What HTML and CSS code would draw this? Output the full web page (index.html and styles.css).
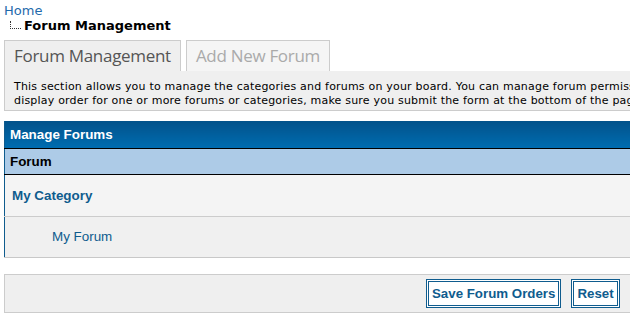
FILE: index.html
```html
<html>

<head>
    <title>Forum Management</title>
    <link rel="stylesheet" href="styles.css">
</head>

<body>

    <div class="page">
        <div class="breadcrumb">
            <a href="#">Home</a>
            <div class="current"><span class="branch"></span>Forum Management</div>
        </div>

        <ul class="tabs">
            <li class="active">Forum Management</li>
            <li>Add New Forum</li>
        </ul>
        <div class="tab-desc">
            This section allows you to manage the categories and forums on your board. You can manage forum permissions and forum moderators as well. If you change the<br>
            display order for one or more forums or categories, make sure you submit the form at the bottom of the page.
        </div>

        <table class="general">
            <tr>
                <th class="title">Manage Forums</th>
            </tr>
            <tr>
                <th class="cols">Forum</th>
            </tr>
            <tr class="row-cat">
                <td><a href="#">My Category</a></td>
            </tr>
            <tr class="row-forum">
                <td><a href="#">My Forum</a></td>
            </tr>
        </table>

        <div class="form-buttons">
            <button>Save Forum Orders</button>
            <button>Reset</button>
        </div>
    </div>

</body>

</html>
```
FILE: styles.css
```css
* {
    margin: 0;
    padding: 0;
    box-sizing: border-box;
}

html {
    overflow: hidden;
}

body {
    font: 13px Verdana, "DejaVu Sans", sans-serif;
    color: #000000;
    background: #ffffff;
}

a {
    color: #0f5c8e;
    text-decoration: none;
}

.page {
    width: 900px;
    padding: 4px 4px;
}

.breadcrumb a {
    color: #1f6aab;
    line-height: 14px;
}

.current {
    font-weight: bold;
    line-height: 16px;
    display: flex;
    align-items: flex-end;
}

.branch {
    width: 11px;
    height: 8px;
    margin: 0 3px 5px 6px;
    border-left: 1px dotted #333333;
    border-bottom: 1px dotted #333333;
}

.tabs {
    list-style: none;
    display: flex;
    align-items: flex-end;
    margin-top: 6px;
    height: 31px;
}

.tabs li {
    font: 17px "Open Sans", "Noto Sans", sans-serif;
    letter-spacing: -0.3px;
    color: #aaaaaa;
    background: #f5f5f5;
    border: 1px solid #cccccc;
    border-bottom: none;
    padding: 0 9px;
    height: 31px;
    line-height: 30px;
    margin-right: 5px;
}

.tabs li.active {
    color: #555555;
    background: #efefef;
}

.tab-desc {
    background: #efefef;
    border: 1px solid #cccccc;
    border-top: none;
    padding: 9px 9px 6px 9px;
    font-size: 11px;
    letter-spacing: 0.2px;
    line-height: 14px;
    white-space: nowrap;
    height: 40px;
    overflow: hidden;
}

table.general {
    width: 100%;
    margin-top: 10px;
    border-collapse: collapse;
    border-left: 1px solid #0f5c8e;
    border-bottom: 1px solid #c8c8c8;
    font: 13.4px "Liberation Sans", Arial, sans-serif;
}

table.general th {
    text-align: left;
    font-weight: bold;
    padding: 0 5px;
}

th.title {
    color: #ffffff;
    height: 27px;
    background: linear-gradient(#02528a, #006cb0);
    border-bottom: 1px solid #000000;
}

th.cols {
    height: 26px;
    background: #adcbe7;
    border-bottom: 1px solid #000000;
}

.row-cat td {
    height: 42px;
    background: #f4f4f4;
    border-bottom: 1px solid #cccccc;
    padding-left: 7px;
    font-weight: bold;
}

.row-forum td {
    height: 41px;
    background: #f0f0f0;
    padding-left: 47px;
}

.form-buttons {
    margin-top: 16px;
    height: 39px;
    background: #efefef;
    border: 1px solid #cccccc;
    padding: 4px 0 0 421px;
    display: flex;
    gap: 10px;
    align-items: flex-start;
}

.form-buttons button {
    font: bold 13.3px "Liberation Sans", Arial, sans-serif;
    color: #0f5c8e;
    background: #ffffff;
    border: 3px double #0f5c8e;
    height: 29px;
    padding: 0 3px;
    cursor: pointer;
}
```
